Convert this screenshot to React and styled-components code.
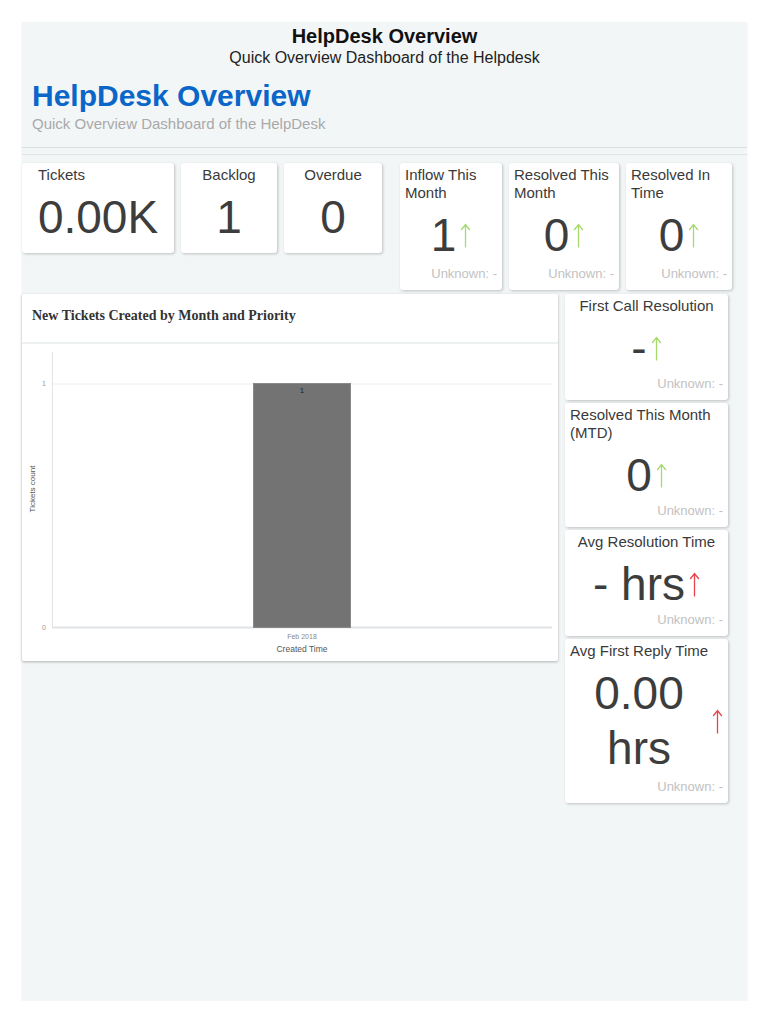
import React from 'react';
import styled, { createGlobalStyle } from 'styled-components';

const GlobalStyle = createGlobalStyle`
  * { box-sizing: border-box; }
  body {
    margin: 0;
    background: #fff;
    font-family: "Liberation Sans", Arial, sans-serif;
  }
`;

const Page = styled.div`
  padding: 22px 21px 0 22px;
`;

const Panel = styled.div`
  height: 979px;
  background: #f3f6f7;
  box-shadow: 0 1px 2px rgba(0, 0, 0, 0.08);
`;

/* ===== HEADER ===== */
const Banner = styled.div`
  padding: 2px 0 14px;
  border-bottom: 1px solid #d9dee1;
`;

const TopTitle = styled.div`
  text-align: center;
  font-size: 20px;
  line-height: 24px;
  font-weight: 700;
  color: #111;
`;

const TopSub = styled.div`
  text-align: center;
  font-size: 16px;
  line-height: 19px;
  color: #222;
`;

const BrandTitle = styled.div`
  margin: 12px 0 0 10px;
  font-size: 30px;
  line-height: 34px;
  font-weight: 700;
  color: #0a66c8;
`;

const BrandSub = styled.div`
  margin: 2px 0 0 10px;
  font-size: 15px;
  line-height: 18px;
  color: #a9a9a9;
`;

const Rule = styled.div`
  margin-top: 6px;
  border-top: 1px solid #e0e4e7;
`;

/* ===== LAYOUT ===== */
const TopRow = styled.div`
  display: flex;
  align-items: flex-start;
  gap: 7px;
  margin-top: 8px;
`;

const Spacer = styled.div`
  width: 4px;
`;

const MainRow = styled.div`
  display: flex;
  align-items: flex-start;
  gap: 7px;
  margin-top: 4px;
`;

const SideCol = styled.div`
  display: flex;
  flex-direction: column;
  gap: 3px;
  width: 163px;
`;

/* ===== KPI CARD ===== */
const Card = styled.div`
  display: flex;
  flex-direction: column;
  width: ${p => p.$w}px;
  min-height: ${p => p.$h || 0}px;
  padding: 3px 5px 8px;
  background: #fff;
  border-radius: 3px;
  box-shadow: 1px 1px 3px rgba(0, 0, 0, 0.22);
`;

const CardTitle = styled.div`
  font-size: 15px;
  line-height: 18px;
  color: #3a3a3a;
  text-align: ${p => p.$align};
  padding-left: ${p => p.$indent || 0}px;
`;

const ValueRow = styled.div`
  display: flex;
  align-items: center;
  justify-content: center;
  margin-top: 6px;
`;

const Value = styled.div`
  font-size: 46px;
  line-height: 55px;
  color: #3d3d3d;
  text-align: center;
`;

const Trend = styled.svg`
  flex: none;
  margin-left: 4px;
  stroke: ${p => (p.$bad ? '#e8434a' : '#a6d96a')};
`;

const Foot = styled.div`
  margin-top: auto;
  text-align: right;
  font-size: 13px;
  line-height: 16px;
  color: #c2c2c2;
`;

function TrendArrow({ bad }) {
  return (
    <Trend $bad={bad} width="11" height="25" viewBox="0 0 11 25" fill="none" strokeWidth="1.3">
      <path d="M5.5 24.5V1.5M1.2 7l4.3-5.5L9.8 7" />
    </Trend>
  );
}

function Kpi({ title, value, trend, foot, w, h, align = 'center', indent }) {
  return (
    <Card $w={w} $h={h}>
      <CardTitle $align={align} $indent={indent}>{title}</CardTitle>
      <ValueRow>
        <Value>{value}</Value>
        {trend && <TrendArrow bad={trend === 'bad'} />}
      </ValueRow>
      {foot && <Foot>{foot}</Foot>}
    </Card>
  );
}

/* ===== CHART CARD ===== */
const ChartCard = styled.div`
  width: 536px;
  background: #fff;
  border-radius: 2px;
  box-shadow: 0 1px 3px rgba(0, 0, 0, 0.28);
`;

const ChartHead = styled.div`
  height: 50px;
  padding: 14px 0 0 10px;
  border-bottom: 2px solid #eef1f2;
  font-family: "Liberation Serif", "Times New Roman", serif;
  font-size: 14px;
  font-weight: 700;
  color: #333;
`;

const ChartBody = styled.div`
  height: 317px;
  padding-bottom: 2px;

  svg { display: block; }
  text { font-family: "Liberation Sans", Arial, sans-serif; }
`;

function TicketsChart() {
  return (
    <ChartBody>
      <svg width="536" height="315" viewBox="0 0 536 315">
        <line x1="30" y1="40" x2="530" y2="40" stroke="#eeeeee" />
        <line x1="30.5" y1="8" x2="30.5" y2="284" stroke="#e4e4e4" />
        <line x1="30" y1="283.5" x2="530" y2="283.5" stroke="#e0e3e5" strokeWidth="2" />
        <rect x="231.5" y="39.5" width="97" height="244" fill="#737373" stroke="#8a8a8a" />
        <text x="280" y="49" fontSize="8" fill="#222" textAnchor="middle">1</text>
        <text x="24" y="42" fontSize="7" fill="#999" textAnchor="end">1</text>
        <text x="24" y="286" fontSize="7" fill="#999" textAnchor="end">0</text>
        <text x="280" y="295" fontSize="7" fill="#888" textAnchor="middle">Feb 2018</text>
        <text x="280" y="308" fontSize="8.5" fill="#555" textAnchor="middle">Created Time</text>
        <text x="13" y="145" fontSize="8" fill="#555" textAnchor="middle" transform="rotate(-90 13 145)">
          Tickets count
        </text>
      </svg>
    </ChartBody>
  );
}

export default function App() {
  return (
    <>
      <GlobalStyle />
      <Page>
        <Panel>
          <Banner>
            <TopTitle>HelpDesk Overview</TopTitle>
            <TopSub>Quick Overview Dashboard of the Helpdesk</TopSub>
            <BrandTitle>HelpDesk Overview</BrandTitle>
            <BrandSub>Quick Overview Dashboard of the HelpDesk</BrandSub>
          </Banner>
          <Rule />

          <TopRow>
            <Kpi w={152} title="Tickets" value="0.00K" align="left" indent={11} />
            <Kpi w={96} title="Backlog" value="1" />
            <Kpi w={98} title="Overdue" value="0" />
            <Spacer />
            <Kpi w={102} h={127} title="Inflow This Month" value="1" trend="good" foot="Unknown: -" align="left" />
            <Kpi w={110} h={127} title="Resolved This Month" value="0" trend="good" foot="Unknown: -" align="left" />
            <Kpi w={106} h={127} title="Resolved In Time" value="0" trend="good" foot="Unknown: -" align="left" />
          </TopRow>

          <MainRow>
            <ChartCard>
              <ChartHead>New Tickets Created by Month and Priority</ChartHead>
              <TicketsChart />
            </ChartCard>
            <SideCol>
              <Kpi w={163} title="First Call Resolution" value="-" trend="good" foot="Unknown: -" />
              <Kpi w={163} title="Resolved This Month (MTD)" value="0" trend="good" foot="Unknown: -" align="left" />
              <Kpi w={163} title="Avg Resolution Time" value="- hrs" trend="bad" foot="Unknown: -" />
              <Kpi w={163} h={164} title="Avg First Reply Time" value="0.00 hrs" trend="bad" foot="Unknown: -" align="left" />
            </SideCol>
          </MainRow>
        </Panel>
      </Page>
    </>
  );
}
